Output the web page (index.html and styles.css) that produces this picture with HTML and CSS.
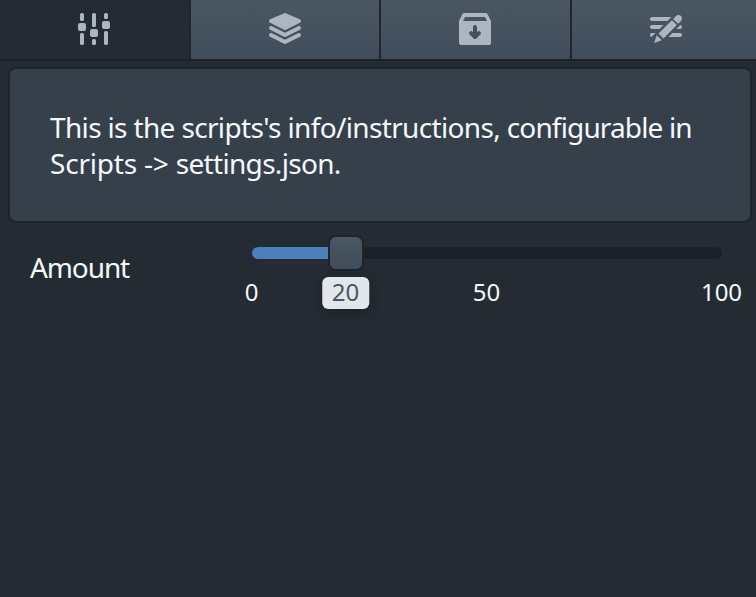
FILE: index.html
```html
<!DOCTYPE html>
<html lang="en">
<head>
<meta charset="utf-8">
<title>Script settings</title>
<link rel="stylesheet" href="styles.css">
</head>
<body>
<nav class="tabs">
  <button class="tab active" aria-label="Settings"><svg class="icon" viewBox="0 0 16 16"><rect x="1" y="0" width="2" height="4" rx=".8"/><rect x="1" y="10" width="2" height="6" rx=".8"/><rect x="0" y="5" width="4" height="4" rx="1"/><rect x="7" y="0" width="2" height="7" rx=".8"/><rect x="7" y="13" width="2" height="3" rx=".8"/><rect x="6" y="8" width="4" height="4" rx="1"/><rect x="13" y="0" width="2" height="3" rx=".8"/><rect x="13" y="9" width="2" height="7" rx=".8"/><rect x="12" y="4" width="4" height="4" rx="1"/></svg></button>
  <button class="tab" aria-label="Layers"><svg class="icon" viewBox="0 0 16 16"><path d="M.55 4.89l7 3.5c.14.07.29.11.45.11s.31-.04.45-.11l7-3.5a.998.998 0 00-.06-1.81L8.4.08a1.006 1.006 0 00-.79 0l-6.99 3a.992.992 0 00-.07 1.81zM15 10c-.16 0-.31.04-.45.11L8 13.38 1.45 10.1c-.14-.06-.29-.1-.45-.1-.55 0-1 .45-1 1 0 .39.23.73.55.89l7 3.5c.14.07.29.11.45.11s.31-.04.45-.11l7-3.5c.32-.16.55-.5.55-.89 0-.55-.45-1-1-1zm0-3.5c-.16 0-.31.04-.45.11L8 9.88 1.45 6.61A.997.997 0 001 6.5c-.55 0-1 .45-1 1 0 .39.23.73.55.89l7 3.5c.14.07.29.11.45.11s.31-.04.45-.11l7-3.5c.32-.16.55-.5.55-.89 0-.55-.45-1-1-1z"/></svg></button>
  <button class="tab" aria-label="Archive"><svg class="icon" viewBox="0 0 16 16"><path fill-rule="evenodd" d="M2.62 0h10.76a1 1 0 01.9.55l1.61 3.23a1 1 0 01.11.44V15a1 1 0 01-1 1H1a1 1 0 01-1-1V4.22a1 1 0 01.1-.44L1.73.55A1 1 0 012.62 0zM3 2L2 4h12l-1-2zM8 6c-.55 0-1 .45-1 1v2.59l-.29-.3A1 1 0 005.3 10.7l2 2c.18.19.43.3.7.3s.52-.11.7-.3l2-2a1 1 0 00-1.41-1.41l-.29.3V7c0-.55-.45-1-1-1z"/></svg></button>
  <button class="tab" aria-label="Edit"><svg class="icon" viewBox="0 0 16 16"><path d="M1 8h3.76l2-2H1c-.55 0-1 .45-1 1s.45 1 1 1zm14.49-4.01c.31-.32.51-.76.51-1.24C16 1.78 15.22 1 14.25 1c-.48 0-.92.2-1.24.51l-1.44 1.44 2.47 2.47 1.45-1.43zM1 4h7.76l2-2H1c-.55 0-1 .45-1 1s.45 1 1 1zm0 6c-.55 0-1 .45-1 1 0 .48.35.86.8.96L2.76 10H1zm9.95-6.43l-6.69 6.69 2.47 2.47 6.69-6.69-2.47-2.47zm4.25 2.47L13.24 8H15c.55 0 1-.45 1-1 0-.48-.35-.86-.8-.96zM2 15l3.86-1.39-2.46-2.44L2 15zm13-5h-3.76l-2 2H15c.55 0 1-.45 1-1s-.45-1-1-1z"/></svg></button>
</nav>
<main>
  <section class="card"><p>This is the scripts's info/instructions, <span class="tight">configurable in</span></p><p class="loose">Scripts -&gt; <span class="file">settings.json.</span></p></section>
  <section class="field">
    <label class="name">Amount</label>
    <div class="slider">
      <div class="track"><div class="fill" style="width: 20%"></div></div>
      <div class="handle" style="left: 20%"></div>
      <span class="tick" style="left: 0%">0</span>
      <span class="tick value" style="left: 20%">20</span>
      <span class="tick" style="left: 50%">50</span>
      <span class="tick" style="left: 100%">100</span>
    </div>
  </section>
</main>
</body>
</html>
```
FILE: styles.css
```css
* { box-sizing: border-box; }

body {
  margin: 0;
  height: 597px;
  overflow: hidden;
  background: #242b32;
  color: #f5f8fa;
  font: 28px/36px "Noto Sans", sans-serif;
}

.tabs {
  display: grid;
  grid-template-columns: 191px 190px 191px 184px;
  height: 61px;
  border-bottom: 2px solid #1c2027;
}

.tab {
  display: flex;
  align-items: flex-start;
  padding: 13px 0 0 78px;
  border: 0;
  border-right: 2px solid #20262e;
  background: linear-gradient(#4a5661, #414d5b);
}

.tab:last-child { border-right: 0; }
.tab.active { background: #252b33; }

.icon {
  display: block;
  flex: none;
  width: 32px;
  height: 32px;
  fill: #abb6c2;
}

.card {
  height: 156px;
  margin: 6px 4px 0 8px;
  padding: 40px;
  border: 2px solid #1e242b;
  border-radius: 8px;
  background: #36404b;
}

.card p {
  margin: 0;
  letter-spacing: -0.65px;
  white-space: nowrap;
}

.card .tight { letter-spacing: -0.85px; }
.card .loose { letter-spacing: -0.2px; }
.card .file { letter-spacing: -0.68px; }

.field {
  display: grid;
  grid-template-columns: 222px 470px;
  padding: 14px 0 0 30px;
}

.name {
  padding-top: 12px;
  letter-spacing: -1.1px;
}

.slider {
  position: relative;
  height: 80px;
  padding-top: 10px;
}

.track {
  height: 12px;
  overflow: hidden;
  border-radius: 6px;
  background: #1d2028;
}

.fill {
  height: 100%;
  background: #4c80bd;
}

.handle {
  position: absolute;
  top: 0;
  width: 32px;
  height: 32px;
  margin-left: -16px;
  border-radius: 6px;
  background: linear-gradient(#4a5661, #414d5b);
  box-shadow: 0 0 0 2px #1e242b;
}

.tick {
  position: absolute;
  top: 40px;
  height: 32px;
  margin-left: -0.5px;
  padding: 0 10px;
  border-radius: 6px;
  font-size: 24px;
  line-height: 30px;
  transform: translateX(-50%);
}

.value {
  background: #e2e7ec;
  color: #4a5663;
  box-shadow: 0 4px 12px rgb(16 22 26 / 40%);
}
```
